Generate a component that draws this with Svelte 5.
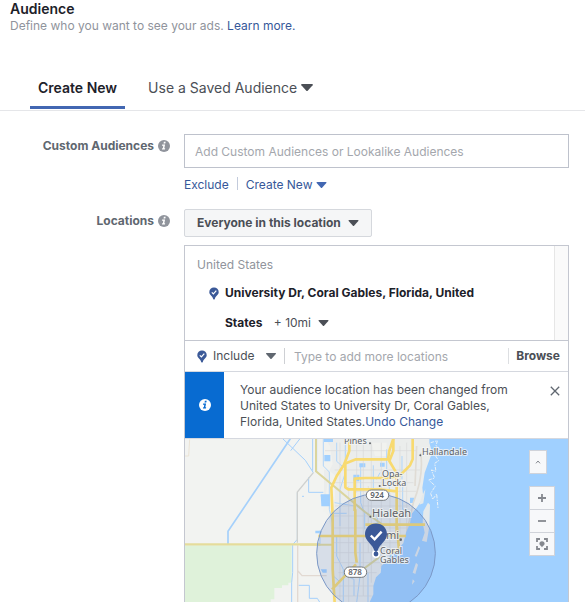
<script>
  const customAudience = $state({ value: '' });
  const place = $state({ value: '' });
</script>

{#snippet info(cls)}
  <svg class={cls} viewBox="0 0 12 12" aria-hidden="true">
    <circle cx="6" cy="6" r="6" class="disc" />
    <path class="mark" d="M5.900 1.800h1.800l-.4 1.700H5.500zM4.200 4.400h2.900L6.300 8.300h.9L6.900 9.600H3.900l.3-1.300h.6l.5-2.600h-1.400z" />
  </svg>
{/snippet}

{#snippet caret()}
  <svg class="caret" viewBox="0 0 10 6" aria-hidden="true">
    <path d="M.4 0h9.2q.6.3.2 1L5.6 5.7q-.6.5-1.2 0L.2 1Q-.2.3.4 0z" fill="currentColor" />
  </svg>
{/snippet}

{#snippet pin()}
  <svg class="pin" viewBox="0 0 10 13" aria-hidden="true">
    <path d="M5 .5a4.6 4.6 0 0 0-4.7 4.7C.3 8 3.600 9 4.200 12q.8 1 1.600 0C6.400 9 9.700 8 9.700 5.200A4.600 4.600 0 0 0 5 .5z" fill="#3b5998" />
    <path d="M2.800 5.300l1.600 1.600 2.900-3.300" fill="none" stroke="#fff" stroke-width="1.200" />
  </svg>
{/snippet}

<main>
  <header>
    <h1>Audience</h1>
    <p>Define who you want to see your ads. <a href="#learn">Learn more.</a></p>
  </header>

  <nav>
    <button class="tab active">Create New</button>
    <button class="tab">Use a Saved Audience {@render caret()}</button>
  </nav>

  <form onsubmit={(e) => e.preventDefault()}>
    <div class="row">
      <div class="label"><label for="custom">Custom Audiences</label>{@render info('info')}</div>
      <div class="field">
        <input id="custom" class="box" placeholder="Add Custom Audiences or Lookalike Audiences" bind:value={customAudience.value} />
        <div class="links">
          <a href="#exclude">Exclude</a>
          <span class="rule"></span>
          <a href="#create">Create New {@render caret()}</a>
        </div>
      </div>
    </div>

    <div class="row second">
      <div class="label"><label for="scope">Locations</label>{@render info('info')}</div>
      <div class="field">
        <button id="scope" type="button" class="scope">Everyone in this location {@render caret()}</button>

        <section class="panel">
          <div class="chosen">
            <div class="places">
              <div class="country">United States</div>
              <div class="place">
                {@render pin()}
                <div>
                  <strong>University Dr, Coral Gables, Florida, United States</strong>
                  <button type="button" class="radius">+ 10mi {@render caret()}</button>
                </div>
              </div>
            </div>
            <div class="track"></div>
          </div>

          <div class="search">
            {@render pin()}
            <button type="button" class="include">Include {@render caret()}</button>
            <input aria-label="Add locations" placeholder="Type to add more locations" bind:value={place.value} />
            <button type="button" class="browse">Browse</button>
          </div>

          <div class="notice">
            <div class="stripe">{@render info('info light')}</div>
            <p>Your audience location has been changed from United States to University Dr, Coral Gables, Florida, United States.<a href="#undo">Undo Change</a></p>
            <button type="button" class="close" aria-label="Close">
              <svg viewBox="0 0 10 10"><path d="M.8.8l8.400 8.400M9.200.8L.8 9.200" stroke="#606770" stroke-width="1.300" /></svg>
            </button>
          </div>

          <div class="map">
            <svg class="chart" viewBox="185 439 383 163" preserveAspectRatio="xMidYMin slice" role="img" aria-label="Map of Miami area">
              <rect x="185" y="439" width="383" height="163" fill="#f2f3f1" />
              <g transform="translate(180 436) scale(.333333)" fill="none">
                <path d="M12 328H335V440H325V448H306V456H283V490H272V500H12z" fill="#dff2da" />
                <path d="M12 60h14l3-50" stroke="#ebe3d5" stroke-width="3" />
                <path d="M144 324V286L331 8" stroke="#a5d0fb" stroke-width="5" />
                <path d="M308 8L376 73L400 110M360 8L332 44M398 8V104M386 124V169H430M366 181h6M352 170V310L338 326V410L335 440V500M356 448H388V487H412L420 500" stroke="#a5d0fb" stroke-width="3" />
                <path d="M400 110L352 168V320" stroke="#cfd1d0" stroke-width="4" />
                <path d="M353 328V500M354 405L366 419H440" stroke="#e2d9d2" stroke-width="4" />
                <path d="M12 325H420" stroke="#e5dc9b" stroke-width="7" />
              </g>
              <g transform="translate(300 436) scale(.333333)" fill="none">
                <path d="M72 0H390V190L350 290L315 325L240 400L225 500H98V300L72 180z" fill="#ebedec" />
                <path d="M50 8H76L90 30L98 85L88 104L60 98V76H50zM88 104L108 120L104 190L88 238L70 225L80 160zM215 20H260V60H225z" fill="#f1f2ef" />
                <path d="M72 8h27v10H72zM73 57h18v19H73zM62 175h28v36H64zM46 284h18v8H46zM160 116h18v20H160zM62 400h18v10H68zM240 80h14v12H240zM330 185h12v16H330zM178 82h18v12H178z" fill="#a0d0ff" />
                <path d="M50 8V108M70 8V90L88 108V220L97 260M110 20V76L126 90M136 20V110L120 160V270M182 86V200L194 232V280M220 88V160M260 40V104L268 130V180M306 60V130M62 180L90 200M98 232H140M60 284V330M104 200L164 210M200 175L228 190M110 300V360L130 400V500M180 320V420L170 500M204 410V500M140 420L162 430V480M100 420L118 436M232 230V262M308 150V220L330 230M240 110L230 130" stroke="#a5d0fb" stroke-width="2.500" />
                <path d="M75 44H350M104 102H360M98 140H340M165 166H350M105 210H330M100 240H330M100 276H320M98 320H300M100 350H270M100 380H250M115 410H230M120 20V500M146 150V500M190 20V480M214 20V440M244 20V400M270 170V360M320 20V300M205 150V350M170 20V170M300 30V300M98 450H220M100 480H215" stroke="#d9dad9" stroke-width="2" />
                <path d="M362 50Q372 120 340 200L320 290M350 30L345 150" stroke="#e0dcd5" stroke-width="5" />
                <path d="M388 0V20L396 50L385 80L374 110L367 155L370 185L350 215L334 235L330 262L318 290L310 322L294 338L276 350L260 375L244 390L242 410L228 424L220 450V475L208 500H820V0z" fill="#a0d0ff" />
                <path d="M384 200l-14 26-2 34 6 30-8 24 14 4 8-46 2-66zM376 160l-10 20-8 26 12-4zM356 330l-12 30 6 2 10-26zM348 380l-10 30 8 4 8-28zM338 430l-2 16 8-10z" fill="#e4e9eb" />
                <path d="M392 20l20-6-4 16 12 10-18 12 14 22-12 8 4 24-14-4 10 24-18 6 20 18-14 22 6 18 12-16 4 42" stroke="#edf3f6" stroke-width="3" stroke-dasharray="10 4 4 3" />
                <path d="M48 8V106L195 228L245 264M240 362L178 408" stroke="#dbd59d" stroke-width="6" />
                <path d="M0 326H98" stroke="#e5dc9b" stroke-width="6" />
                <g stroke="#f8da70" stroke-width="8" stroke-linejoin="round">
                  <path d="M148 8V45L132 86L110 120L94 155L98 240V400L104 500M96 460L168 385" />
                  <path d="M132 84L168 70H264L268 44L280 8M136 84V154L145 160H238L290 166V300" />
                  <path d="M164 225V128L196 126H262L300 118L330 88L338 70V8M280 8V45L268 75L290 112V166" />
                  <path d="M166 220V350L170 380M55 300H318M196 266H375M290 262L297 340L268 352" />
                </g>
                <circle cx="228" cy="352" r="178" fill="#4a72ba" fill-opacity=".16" stroke="#7a98c6" stroke-width="3" />
                <g fill="#606468">
                  <circle cx="210" cy="22" r="3" /><circle cx="361" cy="58" r="3" /><circle cx="239" cy="150" r="3" /><circle cx="211" cy="242" r="3" /><circle cx="302" cy="311" r="4" />
                </g>
                <g fill="#fff" stroke="#73777b" stroke-width="3">
                  <rect x="199" y="162" width="67" height="31" rx="15" /><rect x="133" y="393" width="67" height="31" rx="15" />
                </g>
              </g>
              <g class="names">
                <text x="344" y="444">Pines</text>
                <text x="422" y="455">Hallandale</text>
                <text x="382" y="477">Opa-</text>
                <text x="382" y="486">Locka</text>
                <text x="372" y="517" class="large">Hialeah</text>
                <text x="367" y="539" class="large">Miami</text>
                <text x="380" y="554">Coral</text>
                <text x="380" y="563">Gables</text>
                <text x="377" y="498" text-anchor="middle" class="route">924</text>
                <text x="355" y="575" text-anchor="middle" class="route">878</text>
              </g>
              <circle cx="376" cy="554" r="3.200" fill="#3b5998" stroke="#fff" stroke-width="1.600" />
              <path d="M376 523.500c-6.500 0-11 4.700-11 10.700 0 6.800 7.600 9.800 9.400 16.600q1.600 2.200 3.200 0c1.800-6.800 9.400-9.800 9.400-16.600 0-6-4.500-10.700-11-10.700z" fill="#3b5998" />
              <path d="M370.800 535.500l3.800 3.800 7-7.700" fill="none" stroke="#fff" stroke-width="2.400" />
            </svg>

            <div class="controls">
              <button type="button" class="fold" aria-label="Collapse">
                <svg viewBox="0 0 6 4"><path d="M1 3.300L3 1l2 2.300" /></svg>
              </button>
              <div class="zoom">
                <button type="button" aria-label="Zoom in"><svg viewBox="0 0 14 14"><path d="M7 3v8M3 7h8" stroke-width="1.800" /></svg></button>
                <button type="button" aria-label="Zoom out"><svg viewBox="0 0 14 14"><path d="M3 7h8" stroke-width="1.800" /></svg></button>
                <button type="button" aria-label="Drop pin">
                  <svg viewBox="0 0 14 14">
                    <path d="M2 5V2h3M9 2h3v3M12 9v3H9M5 12H2V9" stroke-width="1.800" />
                    <path d="M7 4.200a2.600 2.600 0 0 0-2.600 2.600C4.400 8.300 6.200 8.700 7 10.200c.8-1.500 2.600-1.900 2.600-3.400A2.600 2.600 0 0 0 7 4.200z" class="solid" />
                  </svg>
                </button>
              </div>
            </div>
          </div>
        </section>
      </div>
    </div>
  </form>
</main>

<style>
  :global(body) { margin: 0; background: #fff; }
  main, button, input { font-family: Inter, Roboto, "Liberation Sans", sans-serif; }
  main { font-size: 12px; line-height: 16px; color: #4b4f56; }
  button { background: none; border: 0; padding: 0; margin: 0; color: inherit; font-size: inherit; line-height: inherit; cursor: pointer; }
  a { color: #365899; text-decoration: none; }
  .caret { width: 11px; height: 6px; vertical-align: 1px; }
  .pin { width: 10px; height: 13px; flex: none; }

  header { padding: 0 10px; }
  h1 { margin: 0; font-size: 14px; line-height: 18px; font-weight: 600; color: #1d2129; }
  header p { margin: 0; color: #90949c; }

  nav { display: flex; gap: 15px; padding: 34px 30px 0; border-bottom: 1px solid #e5e6e9; }
  .tab { font-size: 14px; line-height: 20px; padding: 10px 8px 8px; border-bottom: 3px solid transparent; margin-bottom: 1px; }
  .tab.active { font-weight: 600; color: #1d2129; border-color: #4267b2; }
  .tab .caret { width: 12px; height: 7px; vertical-align: 2px; }

  form { padding: 23px 16px 0 0; }
  .row { display: flex; gap: 14px; }
  .label { flex: none; width: 170px; display: flex; justify-content: flex-end; align-items: center; gap: 4px; height: 24px; font-weight: 700; color: #606770; }
  .info { width: 12px; height: 12px; }
  .disc { fill: #90949c; }
  .mark { fill: #fff; }
  .light .disc { fill: #fff; }
  .light .mark { fill: #086bd1; }
  .field { flex: 1; min-width: 0; }
  input { box-sizing: border-box; min-width: 0; border: 0; outline: 0; font-size: 12px; color: #1d2129; background: #fff; }
  input::placeholder { color: #a4a7ad; opacity: 1; }
  .box { display: block; width: 100%; height: 34px; padding: 0 10px; border: 1px solid #bec2cc; }
  .links { display: flex; align-items: center; gap: 8px; height: 16px; margin-top: 9px; }
  .links .caret { color: #4267b2; }
  .rule { width: 1px; height: 13px; background: #c3cbdc; align-self: flex-start; }

  .second { margin-top: 16px; }
  .scope { display: block; height: 28px; padding: 0 12px; border: 1px solid #d5d8dd; border-radius: 2px; background: #f5f6f7; font-weight: 700; color: #4b4f56; }
  .scope .caret { margin-left: 4px; }

  .panel { margin-top: 8px; border: 1px solid #c4c7d0; border-bottom: 0; }
  .chosen { display: flex; }
  .places { flex: 1; padding: 11px 60px 2px 12px; }
  .country { color: #90949c; }
  .place { display: flex; gap: 6px; padding: 5px 0 0 12px; line-height: 30px; }
  .place .pin { margin-top: 9px; }
  strong { font-weight: 700; color: #1d2129; }
  .radius { margin-left: 8px; line-height: 16px; }
  .radius .caret { margin-left: 4px; }
  .track { width: 13px; background: #fafafa; border-left: 1px solid #e6e6e6; }

  .search { display: flex; align-items: center; height: 30px; padding: 0 8px 0 12px; border-top: 1px solid #c4c7d0; }
  .include { margin-left: 6px; padding-right: 8px; border-right: 1px solid #ced0d4; }
  .include .caret { margin-left: 8px; width: 10px; color: #606770; }
  .search input { flex: 1; padding: 0 9px; }
  .browse { padding-left: 7px; border-left: 1px solid #dddfe2; font-weight: 700; }

  .notice { display: flex; border-top: 1px solid #d5d8df; border-bottom: 1px solid #d5d8df; }
  .stripe { flex: none; width: 39px; display: flex; align-items: center; justify-content: center; background: #086bd1; }
  .notice p { flex: 1; margin: 0; padding: 10px 24px 8px 16px; }
  .close { align-self: flex-start; padding: 14px 8px; }
  .close svg { display: block; width: 10px; height: 10px; }

  .map { position: relative; }
  .chart { display: block; width: 100%; height: auto; }
  .names { font: 9px "Noto Sans", sans-serif; fill: #5d6268; stroke: #f3f5f5; stroke-width: 2px; stroke-opacity: .8; paint-order: stroke; }
  .names .large { font-size: 11px; }
  .names .route { font-size: 8px; font-weight: 600; stroke: none; }
  .controls { position: absolute; top: 11px; right: 13px; }
  .controls button { display: flex; align-items: center; justify-content: center; background: #f7f8fa; border: 1px solid #d0d3da; }
  .fold { width: 18px; height: 24px; }
  .fold svg { width: 6px; height: 4px; }
  .zoom { margin-top: 12px; }
  .zoom button { width: 26px; height: 24px; }
  .zoom button + button { margin-top: -1px; }
  .zoom svg { width: 14px; height: 14px; }
  .controls path { fill: none; stroke: #85888f; }
  .controls .solid { fill: #85888f; stroke: none; }
</style>
